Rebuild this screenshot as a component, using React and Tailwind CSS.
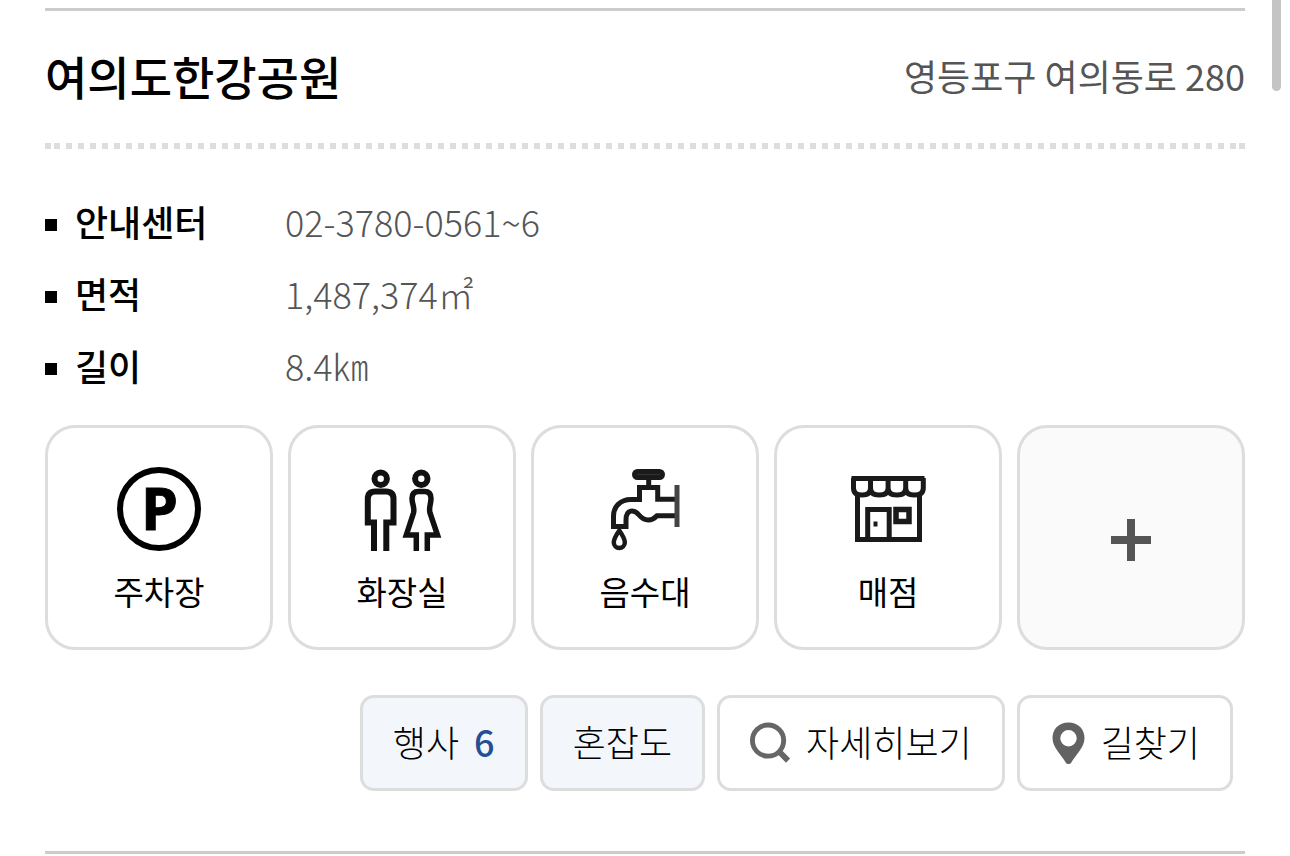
import React, { useState } from 'react';

const park = {
  name: '여의도한강공원',
  address: '영등포구 여의동로 280',
  info: [
    { label: '안내센터', value: '02-3780-0561~6' },
    { label: '면적', value: '1,487,374㎡' },
    { label: '길이', value: '8.4㎞' },
  ],
  events: 6,
};

const ParkingIcon = () => (
  <svg viewBox="0 0 84 84" className="size-[84px]" aria-hidden="true">
    <circle cx="42" cy="42" r="39" fill="none" stroke="#000" strokeWidth="6" />
    <text x="24" y="63" fontSize="59" fontWeight="700" fontFamily="Open Sans, sans-serif" stroke="#000" strokeWidth="1">P</text>
  </svg>
);

const RestroomIcon = () => (
  <svg viewBox="0 0 84 84" className="size-[84px]" fill="none" stroke="#111" strokeWidth="6" aria-hidden="true">
    {/* man */}
    <circle cx="20.7" cy="11.7" r="6.2" />
    <path d="M14 84V55.5H7.8V32q0-7.5 7.5-7.5H26q7.5 0 7.5 7.5v23.5h-7.2V84" />
    {/* woman */}
    <circle cx="61.3" cy="11.7" r="6.2" />
    <path
      strokeWidth="5.5"
      d="M56.3 84V68h-10l7.2-22c1.5-5-1.5-9-1.5-14.5q0-7 6.5-7h6q6.5 0 6.5 7C71 37 68.5 41 70 46l7.5 22H67.3v16"
    />
  </svg>
);

const FaucetIcon = () => (
  <svg viewBox="0 0 84 84" className="size-[84px]" fill="none" stroke="#1a1a1a" strokeWidth="5" aria-hidden="true">
    <rect x="31.5" y="4.5" width="28" height="6" rx="3" fill="#333" />
    <path d="M45.7 11v9" />
    <path d="M73 32.3H54.7V20.5H36.5v12H28C17 32.5 10.5 40 10.5 49v10.5H23V53c0-11 8-11 13-5 6 7 13 6 18 .7h19" />
    <path stroke="#444" d="M74 18v42" />
    <path strokeWidth="4.5" d="M16.3 63.5c-3.5 5-5.5 8.5-5.5 12a5.5 5.5 0 0 0 11 0c0-3.5-2-7-5.5-12z" />
  </svg>
);

const ShopIcon = () => (
  <svg viewBox="0 0 84 84" className="size-[84px]" fill="none" stroke="#1a1a1a" strokeWidth="5" aria-hidden="true">
    <path d="M5.5 11.5h73" />
    <path d="M7.5 11v10q0 7 8.5 7t8.5-7V11v10q0 7 8.8 7t8.8-7V11v10q0 7 8.8 7t8.8-7V11v10q0 7 8.8 7t8.8-7V11" />
    <path d="M11.5 27v45.500h62V27" />
    <path d="M21.7 72V42.5h21.5V72" />
    <rect x="50" y="42.5" width="13" height="12" strokeWidth="5.5" />
    <path d="M29.5 54.500v5" strokeWidth="4" />
  </svg>
);

const SearchIcon = () => (
  <svg viewBox="0 0 42 42" className="h-[42px] w-[41px]" fill="none" stroke="#666" aria-hidden="true">
    <circle cx="18.5" cy="18.5" r="16" strokeWidth="5" />
    <path d="M30 30l9 9" strokeWidth="6" />
  </svg>
);

const PinIcon = () => (
  <svg viewBox="0 0 36 42" className="h-[42px] w-9" aria-hidden="true">
    <path
      fill="#626262"
      fillRule="evenodd"
      d="M18.5.5C8.5.5 2.5 7.5 2.5 16c0 9.5 8.5 16 13.5 25 1 1.3 4 1.3 5 0 5-9 13.5-15.5 13.5-25C34.5 7.5 28.5.5 18.5.5zm0 7.5a8 8 0 1 1 0 16.5 8 8 0 0 1 0-16.5z"
    />
  </svg>
);

const facilities = [
  { label: '주차장', Icon: ParkingIcon },
  { label: '화장실', Icon: RestroomIcon },
  { label: '음수대', Icon: FaucetIcon },
  { label: '매점', Icon: ShopIcon },
];

const ActionButton = ({ icon, tinted, children }) => (
  <button
    type="button"
    className={`flex h-24 items-center gap-[15px] rounded-[14px] border-[3px] border-[#ddd] px-[30px] text-[36px] leading-[54px] font-light text-black ${
      tinted ? 'bg-[#f3f6fb]' : 'bg-white'
    }`}
  >
    {icon}
    <span className="pb-1">{children}</span>
  </button>
);

const App = () => {
  const [expanded, setExpanded] = useState(false);

  return (
    <main className="relative bg-white px-[45px] pt-2 text-black font-['Noto_Sans_CJK_KR',sans-serif]">
      <article className="border-y-[3px] border-[#ccc] pb-[60px]">
        <header className="flex h-[132px] items-center justify-between pb-1">
          <h2 className="text-[46px] leading-[66px] font-medium">{park.name}</h2>
          <address className="text-[36px] leading-[54px] text-[#555] not-italic">{park.address}</address>
        </header>

        {/* dotted divider */}
        <div className="h-[6px] border-x-[6px] border-[#ddd] bg-[repeating-linear-gradient(90deg,transparent_0_3px,#ddd_3px_9px,transparent_9px_12px)]" />

        <dl className="pt-9 pb-6 text-[36px] leading-[72px]">
          {park.info.map((row) => (
            <div key={row.label} className="flex">
              <dt className="flex w-60 items-center gap-[18px] font-medium">
                <span className="mt-2 size-3 bg-black" />
                {row.label}
              </dt>
              <dd className="font-light text-[#555]">{row.value}</dd>
            </div>
          ))}
        </dl>

        <div className="grid grid-cols-5 gap-[15px]">
          {facilities.map(({ label, Icon }) => (
            <div
              key={label}
              className="flex h-[225px] flex-col items-center gap-4 rounded-[30px] border-[3px] border-[#ddd] pt-[39px]"
            >
              <Icon />
              <span className="text-[33px] leading-[48px]">{label}</span>
            </div>
          ))}
          <button
            type="button"
            aria-label="더보기"
            aria-expanded={expanded}
            onClick={() => setExpanded(!expanded)}
            className="flex h-[225px] items-center justify-center rounded-[30px] border-[3px] border-[#ddd] bg-[#fafafa] pt-1"
          >
            <svg viewBox="0 0 40 42" className="h-[42px] w-10" fill="none" stroke="#555" strokeWidth="8" aria-hidden="true">
              <path d="M20 0v42M0 21h40" />
            </svg>
          </button>
        </div>

        <div className="flex justify-end gap-3 pt-[45px] pr-3">
          <ActionButton tinted>
            행사<span className="ml-[15px] font-medium text-[#254f94]">{park.events}</span>
          </ActionButton>
          <ActionButton tinted>혼잡도</ActionButton>
          <ActionButton icon={<SearchIcon />}>자세히보기</ActionButton>
          <ActionButton icon={<PinIcon />}>길찾기</ActionButton>
        </div>
      </article>

      {/* scroll thumb */}
      <div className="absolute top-0 right-[9px] h-[91px] w-[9px] rounded-b-full bg-[#c4c4c4]" />
    </main>
  );
};

export default App;
